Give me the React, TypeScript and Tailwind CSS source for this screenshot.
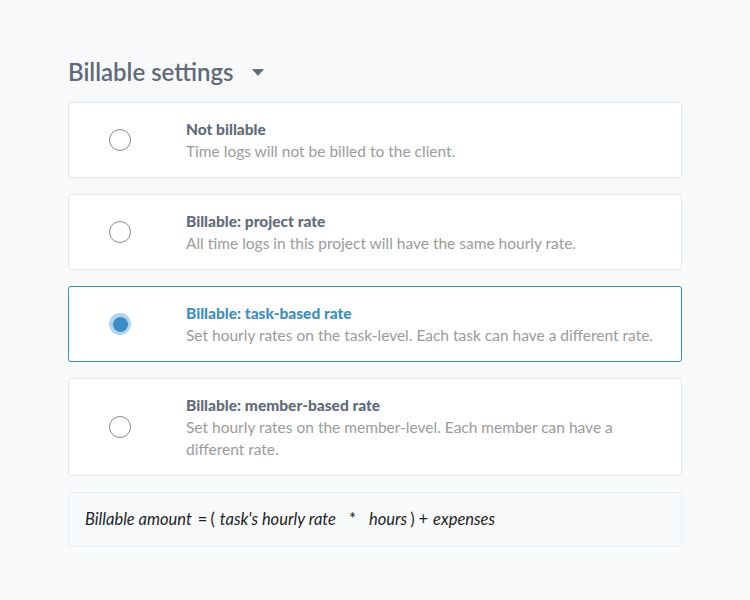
import { useState } from 'react';

const options = [
  {
    value: 'none',
    title: 'Not billable',
    description: 'Time logs will not be billed to the client.',
  },
  {
    value: 'project',
    title: 'Billable: project rate',
    description: 'All time logs in this project will have the same hourly rate.',
  },
  {
    value: 'task',
    title: 'Billable: task-based rate',
    description: 'Set hourly rates on the task-level. Each task can have a different rate.',
  },
  {
    value: 'member',
    title: 'Billable: member-based rate',
    description: 'Set hourly rates on the member-level. Each member can have a different rate.',
  },
];

function Radio({ checked }: { checked: boolean }) {
  if (checked) {
    return (
      <div className="w-[22px] h-[22px] rounded-full bg-[#b3d4ee] flex items-center justify-center">
        <div className="w-[15px] h-[15px] rounded-full bg-[#3a8cc6]" />
      </div>
    );
  }
  return <div className="w-[22px] h-[22px] rounded-full border-[1.5px] border-[#8a8a8a]" />;
}

export default function App() {
  const [selected, setSelected] = useState('task');

  return (
    <div className="min-h-[600px] bg-[#f7f9fb] pt-[57px] px-[68px] font-['Lato',sans-serif]">
      <div className="w-[614px]">
        {/* Header */}
        <div className="flex items-center gap-[18px] h-[30px] mb-[15px]">
          <h2 className="text-[24px] font-semibold text-[#5f6b7a]">Billable settings</h2>
          <svg width="12" height="7" viewBox="0 0 12 7" className="mt-[1px]">
            <path d="M0 0 H12 L6 7 Z" fill="#5f6b7a" />
          </svg>
        </div>

        <div className="flex flex-col gap-4">
          {options.map((opt) => {
            const active = selected === opt.value;
            return (
              <button
                key={opt.value}
                onClick={() => setSelected(opt.value)}
                className={`flex items-center text-left bg-white rounded-[3px] border ${
                  active ? 'border-[#3a8cc6]' : 'border-[#e3e6e9]'
                } min-h-[76px] py-[15px]`}
              >
                <div className="w-[102px] flex justify-center shrink-0">
                  <Radio checked={active} />
                </div>
                <div className="pl-[15px] pr-[18px] text-[15.5px] leading-[22px]">
                  <p className={`font-black ${active ? 'text-[#3a8fc7]' : 'text-[#5f6b7a]'}`}>
                    {opt.title}
                  </p>
                  <p className="text-[#9b9b9b]">{opt.description}</p>
                </div>
              </button>
            );
          })}

          {/* Formula */}
          <div className="h-[55px] bg-[#f8fafc] border border-[#e3eef8] rounded-[3px] flex items-center px-[16px] text-[16.5px] italic text-[#1f1f1f]">
            <span>Billable amount</span>
            <span className="not-italic ml-[6px]">=</span>
            <span className="not-italic ml-[3px]">(</span>
            <span className="ml-[5px]">task's hourly rate</span>
            <span className="not-italic ml-[13px]">*</span>
            <span className="ml-[13px]">hours</span>
            <span className="not-italic ml-[3px]">)</span>
            <span className="not-italic ml-[4px]">+</span>
            <span className="ml-[5px]">expenses</span>
          </div>
        </div>
      </div>
    </div>
  );
}
